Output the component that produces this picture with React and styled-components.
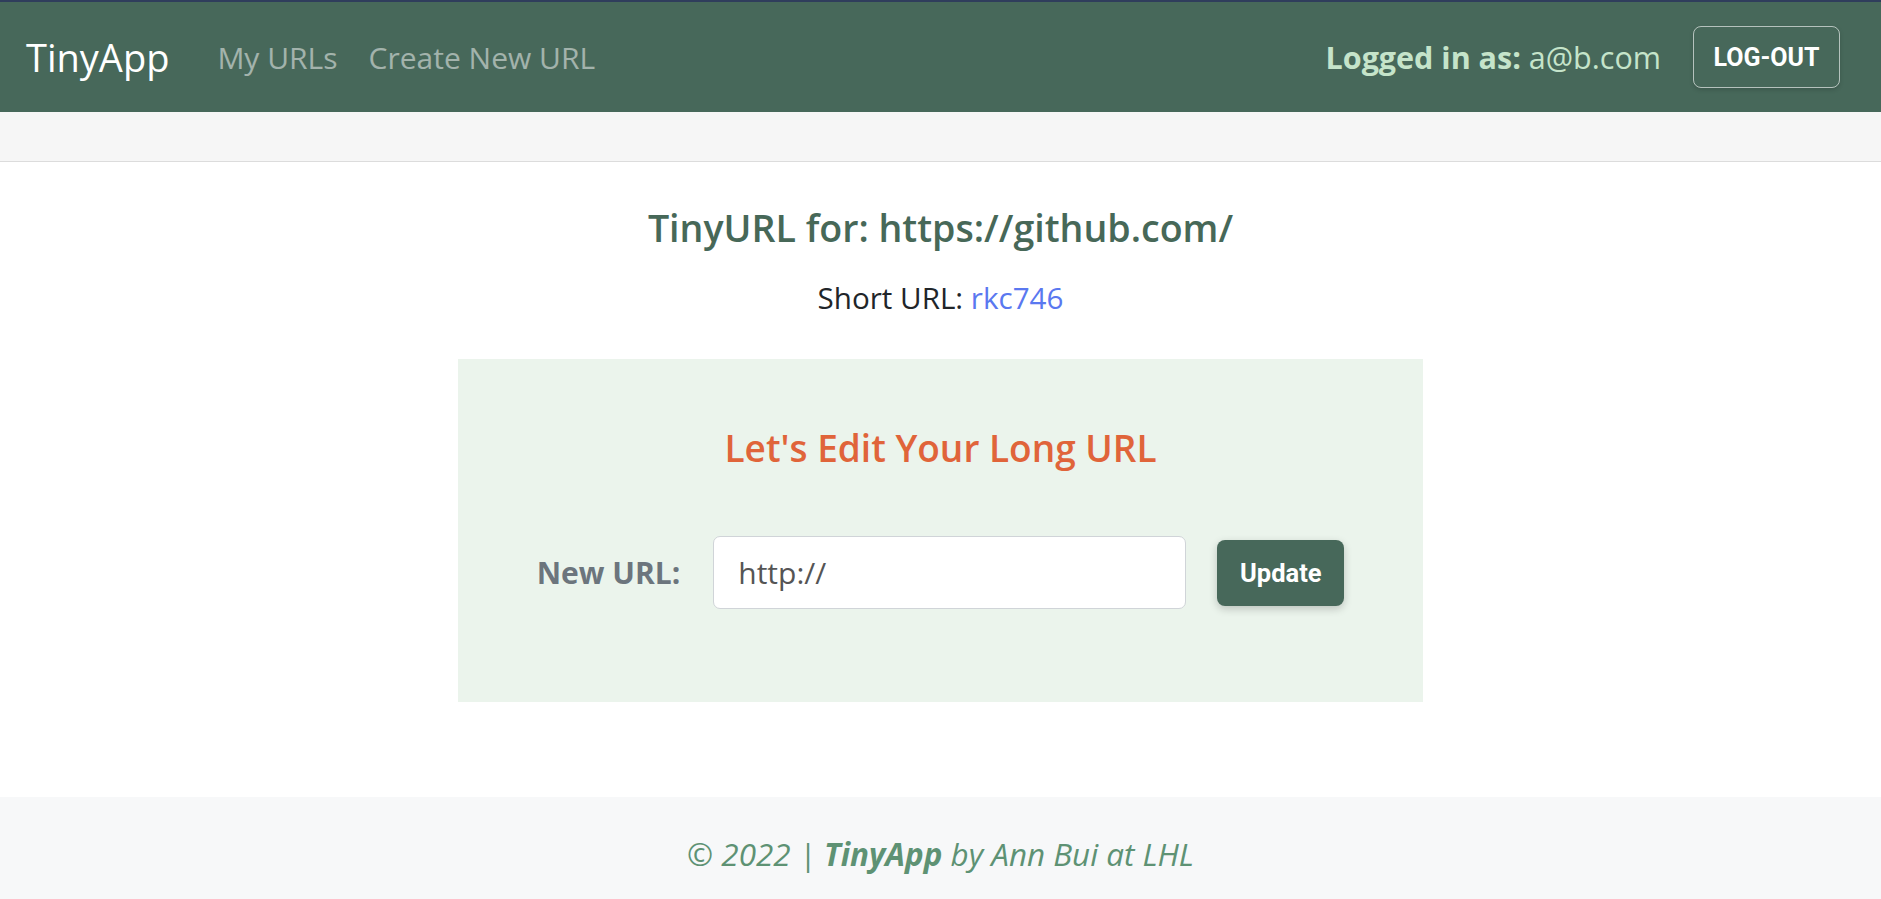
import React from "react";
import styled, { createGlobalStyle } from "styled-components";

const GlobalStyle = createGlobalStyle`
  body {
    margin: 0;
    font-family: "Open Sans", "Noto Sans", sans-serif;
    color: #212529;
    background: #fff;
  }
`;

const Navbar = styled.nav`
  display: flex;
  align-items: center;
  height: 110px;
  padding: 0 41px 0 26px;
  background: #47685a;
  border-top: 2px solid #2f3d5c;
`;
const Brand = styled.a`
  font-size: 38px;
  color: #fff;
  text-decoration: none;
  margin-right: 48px;
`;
const NavLink = styled.a`
  font-size: 30px;
  color: rgba(255, 255, 255, 0.5);
  text-decoration: none;
  margin-right: 31px;
`;
const Spacer = styled.div`
  flex: 1;
`;
const UserInfo = styled.span`
  font-size: 30.5px;
  color: #c5e4ca;
  margin-right: 32px;
  b {
    font-weight: 700;
  }
`;
const OutlineButton = styled.button`
  height: 62px;
  width: 147px;
  border: 1px solid rgba(255, 255, 255, 0.6);
  border-radius: 8px;
  background: transparent;
  color: #fff;
  font-family: Roboto, sans-serif;
  font-weight: 700;
  font-size: 25px;
  box-shadow: 0 2px 4px rgba(0, 0, 0, 0.15);
`;
const SubBar = styled.div`
  height: 49px;
  background: #f6f6f6;
  border-bottom: 1px solid #dcdcdc;
`;
const Main = styled.main`
  text-align: center;
`;
const Title = styled.h2`
  margin: 42px 0 0;
  font-size: 37.6px;
  line-height: 48px;
  font-weight: 600;
  color: #476858;
`;
const ShortLine = styled.p`
  margin: 26px 0 0;
  font-size: 29.6px;
  line-height: 40px;
  a {
    color: #5a78f0;
    text-decoration: none;
  }
`;
const EditCard = styled.section`
  width: 965px;
  margin: 41px auto 0;
  padding: 65px 0 93px;
  background: #ebf4ec;
`;
const CardTitle = styled.h3`
  margin: 0;
  font-size: 37px;
  line-height: 48px;
  font-weight: 600;
  color: #e0643a;
`;
const FormRow = styled.form`
  display: flex;
  align-items: center;
  justify-content: center;
  margin-top: 64px;
`;
const Label = styled.label`
  font-size: 30px;
  font-weight: 700;
  color: #6c757d;
  margin-right: 33px;
`;
const Input = styled.input`
  width: 473px;
  height: 73px;
  box-sizing: border-box;
  padding: 0 24px;
  border: 1px solid #d0d4d8;
  border-radius: 7px;
  background: #fff;
  font-family: inherit;
  font-size: 30px;
  color: #555;
  margin-right: 31px;
`;
const SolidButton = styled.button`
  width: 127px;
  height: 66px;
  border: none;
  border-radius: 8px;
  background: #47685a;
  color: #fff;
  font-family: Roboto, sans-serif;
  font-weight: 700;
  font-size: 25.5px;
  box-shadow: 0 3px 8px rgba(0, 0, 0, 0.2);
`;
const Footer = styled.footer`
  margin-top: 95px;
  padding: 37px 0 40px;
  background: #f7f8f9;
  text-align: center;
  font-size: 31.4px;
  line-height: 40px;
  font-style: italic;
  color: #5e9274;
  b {
    font-weight: 700;
  }
`;

export default function App() {
  return (
    <>
      <GlobalStyle />
      <Navbar>
        <Brand href="#">TinyApp</Brand>
        <NavLink href="#">My URLs</NavLink>
        <NavLink href="#">Create New URL</NavLink>
        <Spacer />
        <UserInfo>
          <b>Logged in as:</b> a@b.com
        </UserInfo>
        <OutlineButton>LOG-OUT</OutlineButton>
      </Navbar>
      <SubBar />
      <Main>
        <Title>TinyURL for: https://github.com/</Title>
        <ShortLine>
          Short URL: <a href="#">rkc746</a>
        </ShortLine>
        <EditCard>
          <CardTitle>Let's Edit Your Long URL</CardTitle>
          <FormRow onSubmit={(e) => e.preventDefault()}>
            <Label>New URL:</Label>
            <Input defaultValue="http://" />
            <SolidButton>Update</SolidButton>
          </FormRow>
        </EditCard>
      </Main>
      <Footer>
        © 2022 | <b>TinyApp</b> by Ann Bui at LHL
      </Footer>
    </>
  );
}
